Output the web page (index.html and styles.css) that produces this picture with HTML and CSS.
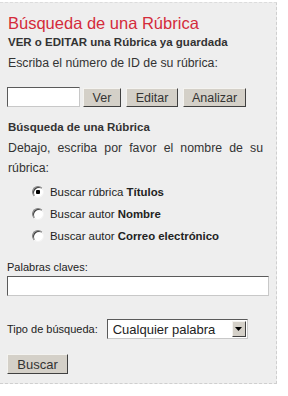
FILE: index.html
```html
<!DOCTYPE html>
<html lang="es">
<head>
    <meta charset="UTF-8">
    <meta name="viewport" content="width=device-width, initial-scale=1.0">
    <title>Búsqueda de una Rúbrica</title>
    <link rel="stylesheet" href="styles.css">
</head>
<body>
    <div class="panel">
        <h1 class="title">Búsqueda de una Rúbrica</h1>
        <form class="id-form">
            <div class="subhead">VER o EDITAR una Rúbrica ya guardada</div>
            <p class="hint">Escriba el número de ID de su rúbrica:</p>
            <div class="id-row">
                <input type="text" class="field id-field" name="rubric_id">
                <button type="button" class="btn btn-ver">Ver</button>
                <button type="button" class="btn btn-editar">Editar</button>
                <button type="button" class="btn btn-analizar">Analizar</button>
            </div>
        </form>

        <form class="search-form">
            <div class="subhead">Búsqueda de una Rúbrica</div>
            <p class="hint">Debajo, escriba por favor el nombre de su rúbrica:</p>
            <ul class="options">
                <li><label><input type="radio" name="scope" value="titles" checked> <span>Buscar rúbrica <b>Títulos</b></span></label></li>
                <li><label><input type="radio" name="scope" value="name"> <span>Buscar autor <b>Nombre</b></span></label></li>
                <li><label><input type="radio" name="scope" value="email"> <span>Buscar autor <b>Correo electrónico</b></span></label></li>
            </ul>
            <label class="small-label" for="keywords">Palabras claves:</label>
            <input type="text" class="field keywords" id="keywords" name="keywords">
            <div class="type-row">
                <label class="small-label" for="type">Tipo de búsqueda:</label>
                <span class="select-wrap">
                    <select id="type" name="type" class="type-select">
                        <option>Cualquier palabra</option>
                        <option>Todas las palabras</option>
                        <option>Frase exacta</option>
                    </select>
                    <span class="select-arrow"><svg width="7" height="4" viewBox="0 0 7 4"><path d="M0 0h7L3.5 4z" fill="#000"/></svg></span>
                </span>
            </div>
            <button type="submit" class="btn btn-buscar">Buscar</button>
        </form>
    </div>
</body>
</html>
```

FILE: styles.css
```css
body {
    font-family: "Liberation Sans", Arial, sans-serif;
    margin: 0;
    background: #fff;
    color: #333;
}
.panel {
    width: 269px;
    margin-top: 2px;
    padding: 8px 0 9px 7px;
    background: #eeeeee;
    border-top: 1px dashed #dcdcdc;
    border-right: 1px dashed #cfcfcf;
    border-bottom: 1px dashed #cfcfcf;
}
.title {
    margin: 0 0 0 1px;
    padding-top: 1px;
    font-size: 16.5px;
    font-weight: normal;
    line-height: 23px;
    color: #d42b3b;
}
.subhead {
    margin-left: 1px;
    font-size: 11.5px;
    font-weight: bold;
    line-height: 15px;
    color: #333;
}
.hint {
    margin: 3px 13px 0 1px;
    font-size: 12.3px;
    line-height: 20px;
    text-align: justify;
    color: #333;
}
.id-row {
    display: flex;
    align-items: flex-end;
    margin-top: 14px;
}
.field {
    box-sizing: border-box;
    margin: 0;
    height: 20px;
    padding: 1px 3px;
    background: #fff;
    border: 1px solid;
    border-color: #5a5a5a #c8c8c8 #c8c8c8 #5a5a5a;
    font-family: inherit;
    font-size: 12px;
}
.id-field {
    width: 73px;
    margin-right: 3px;
}
.btn {
    box-sizing: border-box;
    height: 19px;
    margin: 0 5px 0 0;
    padding: 0;
    background: #d4d0c8;
    border: 1px solid;
    border-color: #f4f3f0 #404040 #404040 #f4f3f0;
    font-family: inherit;
    font-size: 12.5px;
    color: #333;
}
.btn-ver {
    width: 38px;
}
.btn-editar {
    width: 52px;
}
.btn-analizar {
    width: 63px;
}
.search-form {
    margin-top: 13px;
}
.options {
    list-style: none;
    margin: 3px 0 0 25px;
    padding: 0;
}
.options li {
    height: 22px;
    font-size: 11.4px;
    color: #222;
}
.options label {
    display: flex;
    align-items: center;
    gap: 6px;
    height: 22px;
}
.options input {
    appearance: none;
    flex: none;
    width: 12px;
    height: 12px;
    margin: 0;
    border-radius: 50%;
    border: 1px solid;
    border-color: #808080 #f4f4f4 #f4f4f4 #808080;
    background: #fff;
    box-shadow: inset 1px 1px 0 #404040;
}
.options input:checked {
    background: radial-gradient(circle, #000 0 2px, #fff 2.5px);
}
.small-label {
    font-size: 11px;
    color: #222;
}
.search-form > .small-label {
    display: block;
    margin-top: 13px;
    line-height: 14px;
}
.keywords {
    display: block;
    width: 262px;
    margin-top: 2px;
}
.type-row {
    display: flex;
    align-items: center;
    gap: 9px;
    margin-top: 23px;
}
.select-wrap {
    position: relative;
    display: inline-block;
    height: 20px;
}
.type-select {
    appearance: none;
    box-sizing: border-box;
    width: 141px;
    height: 20px;
    margin: 0;
    padding: 0 0 0 5px;
    background: #fff;
    border: 1px solid;
    border-color: #5a5a5a #c8c8c8 #c8c8c8 #5a5a5a;
    font-family: inherit;
    font-size: 13px;
    color: #222;
}
.select-arrow {
    position: absolute;
    top: 2px;
    right: 2px;
    box-sizing: border-box;
    width: 14px;
    height: 16px;
    display: flex;
    align-items: center;
    justify-content: center;
    background: #d4d0c8;
    border: 1px solid;
    border-color: #f4f3f0 #404040 #404040 #f4f3f0;
    pointer-events: none;
}
.btn-buscar {
    display: block;
    width: 61px;
    height: 20px;
    margin-top: 15px;
    font-size: 13px;
}
```
